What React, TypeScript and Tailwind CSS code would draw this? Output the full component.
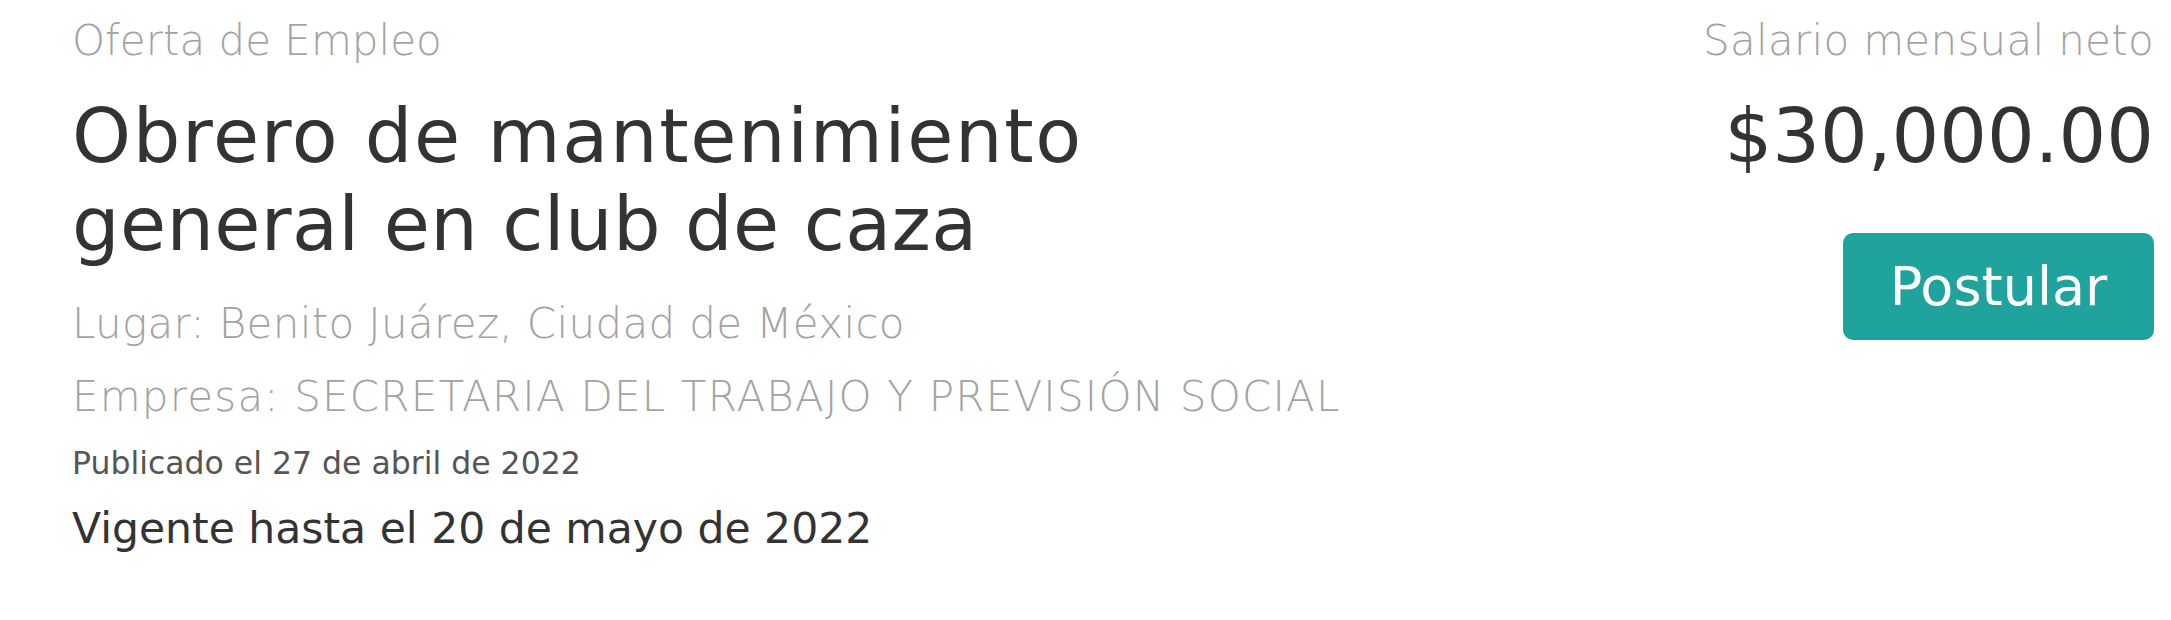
export default function App() {
  return (
    <div className="min-h-[620px] w-full bg-white font-['DejaVu_Sans',sans-serif]">
      <div className="flex justify-between pl-[72px] pr-[17px] pt-[16px]">
        {/* Job details */}
        <div className="flex flex-col">
          <p className="text-[42px] font-extralight leading-[50px] text-[#a3a3a3]">Oferta de Empleo</p>
          <h1 className="mt-[26px] text-[75px] font-normal leading-[88px] text-[#333333]">
            <span className="block tracking-[1.7px]">Obrero de mantenimiento</span>
            <span className="block tracking-[0.35px]">general en club de caza</span>
          </h1>
          <p className="mt-[19px] text-[42px] font-extralight leading-[73px] tracking-[0.35px] text-[#a3a3a3]">
            Lugar: Benito Juárez, Ciudad de México
          </p>
          <p className="text-[42px] font-extralight leading-[73px] tracking-[1.2px] text-[#a3a3a3]">
            Empresa: SECRETARIA DEL TRABAJO Y PREVISIÓN SOCIAL
          </p>
          <p className="mt-[10px] text-[31.5px] leading-[40px] text-[#555555]">Publicado el 27 de abril de 2022</p>
          <p className="mt-[21px] text-[42.5px] leading-[50px] text-[#333333]">Vigente hasta el 20 de mayo de 2022</p>
        </div>

        {/* Salary + apply */}
        <div className="flex flex-col items-end">
          <p className="text-[42px] font-extralight leading-[50px] tracking-[0.3px] text-[#a3a3a3]">
            Salario mensual neto
          </p>
          <p className="mt-[26px] text-[75px] leading-[88px] text-[#333333]">$30,000.00</p>
          <button className="mt-[53px] flex h-[107px] w-[311px] items-center justify-center rounded-[10px] bg-[#20a39c] text-[54px] leading-none text-white">
            Postular
          </button>
        </div>
      </div>
    </div>
  )
}
